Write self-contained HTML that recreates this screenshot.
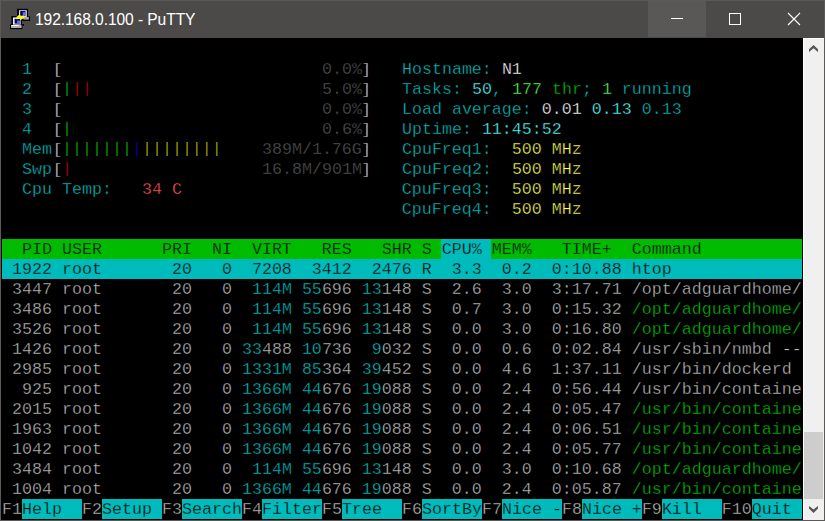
<!DOCTYPE html>
<html><head><meta charset="utf-8"><title>192.168.0.100 - PuTTY</title>
<style>
html,body{margin:0;padding:0;background:#000;overflow:hidden}
body{width:825px;height:521px;position:relative}
#win{position:absolute;left:0;top:0;width:825px;height:521px;background:#000;overflow:hidden}
#tb{position:absolute;left:0;top:0;width:825px;height:38px;background:#4c4a48}
#bt{position:absolute;left:0;top:0;width:825px;height:1px;background:#5c5a58}
#bl{position:absolute;left:0;top:0;width:1px;height:521px;background:#5c5a58}
#br{position:absolute;left:824px;top:0;width:1px;height:521px;background:#5c5a58}
#bb{position:absolute;left:0;top:520px;width:825px;height:1px;background:#5c5a58}
#title{position:absolute;left:35px;top:1px;height:38px;line-height:38px;color:#fff;font-family:"Liberation Sans",sans-serif;font-size:15.6px;letter-spacing:-0.08px;white-space:pre}
#ico{position:absolute;left:0;top:0}
.cb{position:absolute;top:1px;height:36px;width:58px}
#bmin{left:648px;background:#5a5856}
#bmax{left:706px}
#bcls{left:764px}
.cb svg{position:absolute;left:0;top:0}
#sb{position:absolute;left:803px;top:38px;width:21px;height:482px;background:#f0f0f0;box-shadow:inset 1px 1px 0 #fff}
#thumb{position:absolute;left:1px;top:394px;width:19px;height:67px;background:#cdcdcd}
#sb svg{position:absolute;left:0}
#term{position:absolute;left:2px;top:39px;width:800px;height:480px;background:#000;color:#bbb;font-family:"Liberation Mono","DejaVu Sans Mono",monospace;font-size:16.664px;overflow:hidden}
.row{height:19px;padding-top:1px;line-height:20px;white-space:pre;width:800px;-webkit-text-stroke:0.35px #000}
.c{color:#0bb}.C{color:#5ff}.W{color:#fff}.k{color:#555}.g{color:#0b0}.G{color:#5f5}
.r{color:#b00}.R{color:#f55}.b{color:#00b}.y{color:#bb0}.Y{color:#ff5}
.p{font-size:14.2px;letter-spacing:1.4786px;position:relative;left:0.7px;top:-1px;-webkit-text-stroke:0.15px #000}
.q{font-size:14.5px;letter-spacing:1.2986px;position:relative;top:-0.5px}.ql{left:1.3px}.qr{left:-0.2px}
.hd{color:#000;background:linear-gradient(to right,#0b0 0,#0b0 439px,#0bb 439px,#0bb 489px,#0b0 489px);-webkit-text-stroke-color:#0b0}
.hc{-webkit-text-stroke-color:#0bb}
.sel{background:#0bb;color:#000;-webkit-text-stroke-color:#0bb}
.fb{color:#000;-webkit-text-stroke-color:#0bb}
.fk{background:linear-gradient(to right,#000 0,#000 20px,#0bb 20px,#0bb 80px,#000 80px,#000 100px,#0bb 100px,#0bb 160px,#000 160px,#000 180px,#0bb 180px,#0bb 240px,#000 240px,#000 260px,#0bb 260px,#0bb 320px,#000 320px,#000 340px,#0bb 340px,#0bb 400px,#000 400px,#000 420px,#0bb 420px,#0bb 480px,#000 480px,#000 500px,#0bb 500px,#0bb 560px,#000 560px,#000 580px,#0bb 580px,#0bb 640px,#000 640px,#000 660px,#0bb 660px,#0bb 720px,#000 720px,#000 750px,#0bb 750px)}
</style></head><body>
<div id="win">
<div id="tb"></div>
<div class="cb" id="bmin"><svg width="58" height="37" viewBox="0 0 58 37"><rect x="23" y="17" width="12" height="1" fill="#fff"/></svg></div>
<div class="cb" id="bmax"><svg width="58" height="37" viewBox="0 0 58 37"><rect x="23.5" y="12.5" width="11" height="11" fill="none" stroke="#fff" stroke-width="1"/></svg></div>
<div class="cb" id="bcls"><svg width="58" height="37" viewBox="0 0 58 37"><path d="M24 12 L36 24 M36 12 L24 24" stroke="#fff" stroke-width="1.1" fill="none"/></svg></div>
<svg id="ico" width="40" height="38" viewBox="0 0 40 38"><defs><filter id="bl" x="-10%" y="-10%" width="120%" height="120%"><feGaussianBlur stdDeviation="0.45"/></filter></defs>
<g filter="url(#bl)">
<rect x="17" y="8.8" width="11" height="11.4" fill="#000"/>
<rect x="22.5" y="16.5" width="7.5" height="4.5" fill="#000"/>
<rect x="19" y="10.2" width="7.8" height="8.4" fill="#e0e0e0"/>
<rect x="20.2" y="11" width="5.2" height="4.8" fill="#000080"/>
<rect x="22.8" y="12.2" width="2.6" height="3.2" fill="#7070e0"/>
<rect x="23.5" y="17" width="5.3" height="2.6" fill="#a8a8a8"/>
<rect x="11.4" y="16" width="10.6" height="10" fill="#000"/>
<rect x="10" y="24.3" width="12.4" height="4.8" fill="#000"/>
<rect x="22.3" y="24" width="1.7" height="1.8" fill="#000"/>
<rect x="13" y="17.4" width="7.8" height="7.2" fill="#f0f0f0"/>
<rect x="14.6" y="18.8" width="5.6" height="4.8" fill="#000080"/>
<rect x="17" y="20.6" width="3.2" height="3" fill="#6868e0"/>
<rect x="11" y="25" width="10.6" height="3" fill="#b0b0b0"/>
<rect x="11.5" y="25" width="7" height="0.9" fill="#fff"/>
<path d="M16.4 17 L19.4 14.5 L20.8 15.9 L24.1 15.5 L24.3 17.5 L20.8 19.9 L19.4 18.5 L16.7 19.4 Z" fill="#ffff00"/>
</g></svg>
<div id="title">192.168.0.100 - PuTTY</div>
<div id="term">
<div class="row"></div>
<div class="row">  <span class="c">1  </span><span class="W q ql">[</span>                          <span class="k">0.0%</span><span class="W q qr">]</span>   <span class="c">Hostname: </span><span class="W">N1</span></div>
<div class="row">  <span class="c">2  </span><span class="W q ql">[</span><span class="g p">|</span><span class="r p">||</span>                       <span class="k">5.0%</span><span class="W q qr">]</span>   <span class="c">Tasks: </span><span class="C">50</span><span class="c">, </span><span class="G">177</span><span class="g"> thr</span><span class="c">; </span><span class="G">1</span><span class="c"> running</span></div>
<div class="row">  <span class="c">3  </span><span class="W q ql">[</span>                          <span class="k">0.0%</span><span class="W q qr">]</span>   <span class="c">Load average: </span><span class="W">0.01</span> <span class="C">0.13</span> <span class="c">0.13</span></div>
<div class="row">  <span class="c">4  </span><span class="W q ql">[</span><span class="g p">|</span>                         <span class="k">0.6%</span><span class="W q qr">]</span>   <span class="c">Uptime: </span><span class="C">11:45:52</span></div>
<div class="row">  <span class="c">Mem</span><span class="W q ql">[</span><span class="g p">|||||||</span><span class="b p">|</span><span class="y p">||||||||</span>    <span class="k">389M/1.76G</span><span class="W q qr">]</span>   <span class="c">CpuFreq1:  </span><span class="Y">500 MHz</span></div>
<div class="row">  <span class="c">Swp</span><span class="W q ql">[</span><span class="r p">|</span>                   <span class="k">16.8M/901M</span><span class="W q qr">]</span>   <span class="c">CpuFreq2:  </span><span class="Y">500 MHz</span></div>
<div class="row">  <span class="c">Cpu Temp:   </span><span class="R">34 C</span>                      <span class="c">CpuFreq3:  </span><span class="Y">500 MHz</span></div>
<div class="row">                                        <span class="c">CpuFreq4:  </span><span class="Y">500 MHz</span></div>
<div class="row"></div>
<div class="row hd">  PID USER      PRI  NI  VIRT   RES   SHR S <span class="hc">CPU% </span>MEM%   TIME+  Command          </div>
<div class="row sel"> 1922 root       20   0  7208  3412  2476 R  3.3  0.2  0:10.88 htop             </div>
<div class="row"> 3447 root       20   0  <span class="c">114M</span> <span class="c">55</span>696 <span class="c">13</span>148 S  2.6  3.0  3:17.71 /opt/adguardhome/</div>
<div class="row"> 3486 root       20   0  <span class="c">114M</span> <span class="c">55</span>696 <span class="c">13</span>148 S  0.7  3.0  0:15.32 <span class="g">/opt/adguardhome/</span></div>
<div class="row"> 3526 root       20   0  <span class="c">114M</span> <span class="c">55</span>696 <span class="c">13</span>148 S  0.0  3.0  0:16.80 <span class="g">/opt/adguardhome/</span></div>
<div class="row"> 1426 root       20   0 <span class="c">33</span>488 <span class="c">10</span>736  <span class="c">9</span>032 S  0.0  0.6  0:02.84 /usr/sbin/nmbd --</div>
<div class="row"> 2985 root       20   0 <span class="c">1331M</span> <span class="c">85</span>364 <span class="c">39</span>452 S  0.0  4.6  1:37.11 /usr/bin/dockerd</div>
<div class="row">  925 root       20   0 <span class="c">1366M</span> <span class="c">44</span>676 <span class="c">19</span>088 S  0.0  2.4  0:56.44 /usr/bin/containe</div>
<div class="row"> 2015 root       20   0 <span class="c">1366M</span> <span class="c">44</span>676 <span class="c">19</span>088 S  0.0  2.4  0:05.47 <span class="g">/usr/bin/containe</span></div>
<div class="row"> 1963 root       20   0 <span class="c">1366M</span> <span class="c">44</span>676 <span class="c">19</span>088 S  0.0  2.4  0:06.51 <span class="g">/usr/bin/containe</span></div>
<div class="row"> 1042 root       20   0 <span class="c">1366M</span> <span class="c">44</span>676 <span class="c">19</span>088 S  0.0  2.4  0:05.77 <span class="g">/usr/bin/containe</span></div>
<div class="row"> 3484 root       20   0  <span class="c">114M</span> <span class="c">55</span>696 <span class="c">13</span>148 S  0.0  3.0  0:10.68 <span class="g">/opt/adguardhome/</span></div>
<div class="row"> 1004 root       20   0 <span class="c">1366M</span> <span class="c">44</span>676 <span class="c">19</span>088 S  0.0  2.4  0:05.87 <span class="g">/usr/bin/containe</span></div>
<div class="row fk">F1<span class="fb">Help  </span>F2<span class="fb">Setup </span>F3<span class="fb">Search</span>F4<span class="fb">Filter</span>F5<span class="fb">Tree  </span>F6<span class="fb">SortBy</span>F7<span class="fb">Nice -</span>F8<span class="fb">Nice +</span>F9<span class="fb">Kill  </span>F10<span class="fb">Quit </span></div>
</div>
<div id="sb"><div id="thumb"></div>
<svg width="21" height="482" style="top:0" viewBox="0 0 21 482"><path d="M6 11.3 L10.5 6.9 L15 11.3 L15 13.9 L10.5 10.2 L6 13.9 Z" fill="#555"/><path d="M6 468 L10.5 471.6 L15 468 L15 470.6 L10.5 475 L6 470.6 Z" fill="#555"/></svg>
</div>
<div id="bt"></div><div id="bl"></div><div id="br"></div><div id="bb"></div>
</div>
</body></html>
